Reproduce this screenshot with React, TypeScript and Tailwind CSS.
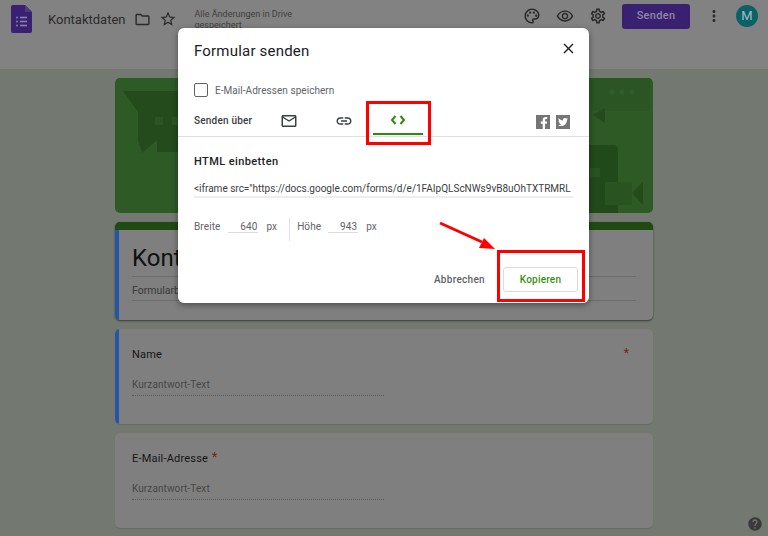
import React from 'react'
import {
  MdClose,
  MdHelp,
  MdLink,
  MdMoreVert,
  MdOutlineFolder,
  MdOutlineMailOutline,
  MdOutlinePalette,
  MdOutlineRemoveRedEye,
  MdOutlineSettings,
  MdStarBorder,
} from 'react-icons/md'
import { FaFacebookF, FaTwitter } from 'react-icons/fa'

// page behind the modal, colours are already the dimmed ones
function Header() {
  return (
    <header className="h-[69px] shrink-0 bg-[#828282] flex items-start">
      <svg className="ml-[11px] mt-[5px]" width="21" height="28" viewBox="0 0 21 28">
        <path d="M2 0h12l7 7v19a2 2 0 0 1-2 2H2a2 2 0 0 1-2-2V2a2 2 0 0 1 2-2z" fill="#3a2070" />
        <path d="M14 0l7 7h-7z" fill="#4f3a80" />
        <g fill="#8a80a8">
          <circle cx="6" cy="12.5" r="1" />
          <circle cx="6" cy="16.5" r="1" />
          <circle cx="6" cy="20.5" r="1" />
          <rect x="9" y="11.7" width="7" height="1.6" />
          <rect x="9" y="15.7" width="7" height="1.6" />
          <rect x="9" y="19.7" width="7" height="1.6" />
        </g>
      </svg>
      <span className="ml-[16px] mt-[10px] text-[13px] leading-[20px] text-[#2b2b2b]">Kontaktdaten</span>
      <MdOutlineFolder className="ml-[9px] mt-[11px] text-[#2a2a2a]" size={17} />
      <MdStarBorder className="ml-[8px] mt-[10px] text-[#2a2a2a]" size={18} />
      <div className="ml-[17px] mt-[9px] w-[130px] text-[9px] leading-[11px] text-[#404040]">
        Alle Änderungen in Drive gespeichert
      </div>
      <div className="ml-auto flex items-center h-[32px] pr-[10px]">
        <MdOutlinePalette className="text-[#2a2a2a]" size={18} />
        <MdOutlineRemoveRedEye className="ml-[15px] text-[#2a2a2a]" size={18} />
        <MdOutlineSettings className="ml-[15px] text-[#2a2a2a]" size={18} />
        <button className="ml-[15px] w-[68px] h-[25px] rounded-[3px] bg-[#3a2070] text-[#8f88a8] text-[11px] font-medium tracking-[0.3px]">
          Senden
        </button>
        <MdMoreVert className="ml-[15px] text-[#2a2a2a]" size={18} />
        <div className="ml-[13px] w-[22px] h-[22px] rounded-full bg-[#0b6167] flex items-center justify-center text-[#a0c0c0] text-[13px]">
          M
        </div>
      </div>
    </header>
  )
}

function Banner() {
  return (
    <div className="h-[135px] rounded-[5px] bg-[#2d5a25] overflow-hidden">
      <svg width="538" height="135" viewBox="0 0 538 135">
        <path d="M8 13H200V74H42V62L27 75L23 62V34z" fill="#234b1b" />
        <rect x="40" y="39" width="8" height="8" fill="#2b5623" />
        <rect x="57" y="39" width="8" height="8" fill="#2b5623" />
        <rect x="475" y="0" width="60" height="33" fill="#2b5623" />
        <circle cx="497" cy="14" r="2.5" fill="#305e28" />
        <circle cx="507" cy="14" r="2.5" fill="#305e28" />
        <circle cx="517" cy="14" r="2.5" fill="#305e28" />
        <path d="M478 37L490 30V45z" fill="#234b1b" />
        <path d="M440 67H498a5 5 0 0 1 5 5V135H440z" fill="#214a1a" />
        <rect x="475" y="90" width="10" height="9" fill="#285220" />
        <rect x="490" y="104" width="27" height="23" fill="#295421" />
        <path d="M517 115L528 104V127z" fill="#234b1b" />
      </svg>
    </div>
  )
}

function TitleCard() {
  return (
    <div className="h-[98px] rounded-[5px] bg-[#7f7f7f] overflow-hidden border-t-[8px] border-[#1f4a12] shadow-[0_1px_2px_rgba(0,0,0,0.5)] flex">
      <div className="w-[4px] bg-[#2456a6]" />
      <div className="flex-1 pl-[13px] pr-[17px]">
        <div className="h-[47px] pt-[12px] border-b border-[#6c6c6c] text-[24px] leading-[32px] text-[#111111]">
          Kontaktdaten
        </div>
        <div className="h-[24px] pt-[6px] border-b border-[#6c6c6c] text-[10.5px] leading-[16px] text-[#3a3a3a]">
          Formularbeschreibung
        </div>
      </div>
    </div>
  )
}

function QuestionCard({ label, active, star }: { label: string; active?: boolean; star?: 'inline' | 'right' }) {
  return (
    <div className="h-[95px] rounded-[5px] bg-[#7f7f7f] overflow-hidden flex shadow-[0_1px_1px_rgba(0,0,0,0.1)]">
      <div className={active ? 'w-[4px] bg-[#2456a6]' : 'w-[4px]'} />
      <div className="flex-1 pl-[13px] pr-[24px] pt-[18px]">
        <div className="flex h-[16px] items-center text-[11px] tracking-[0.2px] text-[#151515]">
          <span>{label}</span>
          {star === 'inline' && <span className="ml-[4px] -mt-[5px] text-[#7d1a14] text-[12px]">*</span>}
          {star === 'right' && <span className="ml-auto -mt-[5px] text-[#7d1a14] text-[12px]">*</span>}
        </div>
        <div className="mt-[14px] w-[252px] h-[19px] border-b border-dotted border-[#5a5a5a] text-[10px] leading-[16px] tracking-[0.1px] text-[#474747]">
          Kurzantwort-Text
        </div>
      </div>
    </div>
  )
}

function ShareDialog() {
  return (
    <div className="relative w-[411px] h-[275px] rounded-[6px] bg-white shadow-[0_2px_6px_rgba(0,0,0,0.4)]">
      <div className="flex items-center justify-between pl-[16px] pr-[12px] h-[44px] pt-[2px]">
        <span className="text-[15px] tracking-[0.2px] text-[#202124]">Formular senden</span>
        <MdClose className="-mt-[6px] text-[#202124]" size={17} />
      </div>
      <label className="flex items-center pl-[16px] mt-[10px] h-[16px]">
        <span className="w-[14px] h-[14px] rounded-[2px] border-[1.5px] border-[#5f6368]" />
        <span className="ml-[7px] text-[10px] tracking-[0.05px] text-[#5f6368]">E-Mail-Adressen speichern</span>
      </label>
      <div className="mt-[3px] h-[36px] pl-[16px] border-b border-[#e0e0e0] flex items-start">
        <span className="mt-[12px] w-[60px] leading-[16px] text-[10px] font-medium tracking-[0.2px] text-[#3c4043]">Senden über</span>
        <MdOutlineMailOutline className="ml-[26px] mt-[11px] text-[#3c4043]" size={18} />
        <MdLink className="ml-[37px] mt-[11px] text-[#3c4043]" size={18} />
        <div className="ml-[20px] w-[50px] h-[34px] border-b-[2px] border-[#2e8b10] flex justify-center">
          <svg className="mt-[11px]" width="16" height="16" viewBox="0 0 16 16" fill="none" stroke="#2e8b10" strokeWidth="2">
            <path d="M5.5 4L2 8l3.5 4" />
            <path d="M10.5 4L14 8l-3.5 4" />
          </svg>
        </div>
        <div className="ml-[113px] mt-[14px] w-[14px] h-[14px] bg-[#757575] flex items-end justify-end">
          <FaFacebookF className="text-white" size={12} />
        </div>
        <div className="ml-[6px] mt-[14px] w-[14px] h-[14px] bg-[#757575] flex items-center justify-center">
          <FaTwitter className="text-white" size={10} />
        </div>
      </div>
      <div className="px-[16px] pt-[17px]">
        <div className="text-[11px] leading-[16px] font-medium tracking-[0.4px] text-[#202124]">HTML einbetten</div>
        <div className="mt-[10px] h-[18px] pt-[1px] border-b-[2px] border-[#eeeeee] text-[10px] leading-[16px] text-[#3c4043] whitespace-nowrap overflow-hidden">
          {'<iframe src="https://docs.google.com/forms/d/e/1FAIpQLScNWs9vB8uOhTXTRMRL'}
        </div>
      </div>
      <div className="mt-[20px] pl-[16px] flex items-start h-[24px] text-[10px] leading-[18px] tracking-[0.1px] text-[#5f6368]">
        <span>Breite</span>
        <span className="ml-[8px] w-[30px] h-[15px] pr-[1px] text-right border-b border-[#dddddd]">640</span>
        <span className="ml-[8px]">px</span>
        <div className="ml-[12px] h-[23px] w-px bg-[#e0e0e0]" />
        <span className="ml-[7px]">Höhe</span>
        <span className="ml-[7px] w-[30px] h-[15px] pr-[1px] text-right border-b border-[#dddddd]">943</span>
        <span className="ml-[8px]">px</span>
      </div>
      <div className="mt-[25px] pr-[11px] flex items-center justify-end">
        <button className="text-[10px] font-medium tracking-[0.3px] text-[#5f6368]">Abbrechen</button>
        <button className="ml-[18px] w-[75px] h-[25px] rounded-[3px] border border-[#dadce0] text-[10px] font-medium tracking-[0.2px] text-[#38900f]">
          Kopieren
        </button>
      </div>

      <div className="absolute left-[188px] top-[73px] w-[65px] h-[44px] border-[3px] border-[#ff0000]" />
      <div className="absolute left-[319px] top-[222px] w-[88px] h-[52px] border-[3px] border-[#ff0000]" />
      <svg className="absolute left-[258px] top-[190px]" width="64" height="34" viewBox="0 0 64 34">
        <path d="M4 5L46 24" stroke="#ff0000" strokeWidth="3" />
        <path d="M59 31L43 30L48 20z" fill="#ff0000" />
      </svg>
    </div>
  )
}

export default function App() {
  return (
    <div className="relative h-[536px] overflow-hidden bg-[#737871] font-['Roboto',sans-serif]">
      <Header />
      <main className="w-[538px] ml-[115px] mt-[9px] flex flex-col gap-[9px]">
        <Banner />
        <TitleCard />
        <QuestionCard label="Name" active star="right" />
        <QuestionCard label="E-Mail-Adresse" star="inline" />
      </main>
      <MdHelp className="absolute right-[5px] bottom-[4px] text-[#3a3a3a]" size={16} />

      <div className="absolute left-[178px] top-[28px]">
        <ShareDialog />
      </div>
    </div>
  )
}
